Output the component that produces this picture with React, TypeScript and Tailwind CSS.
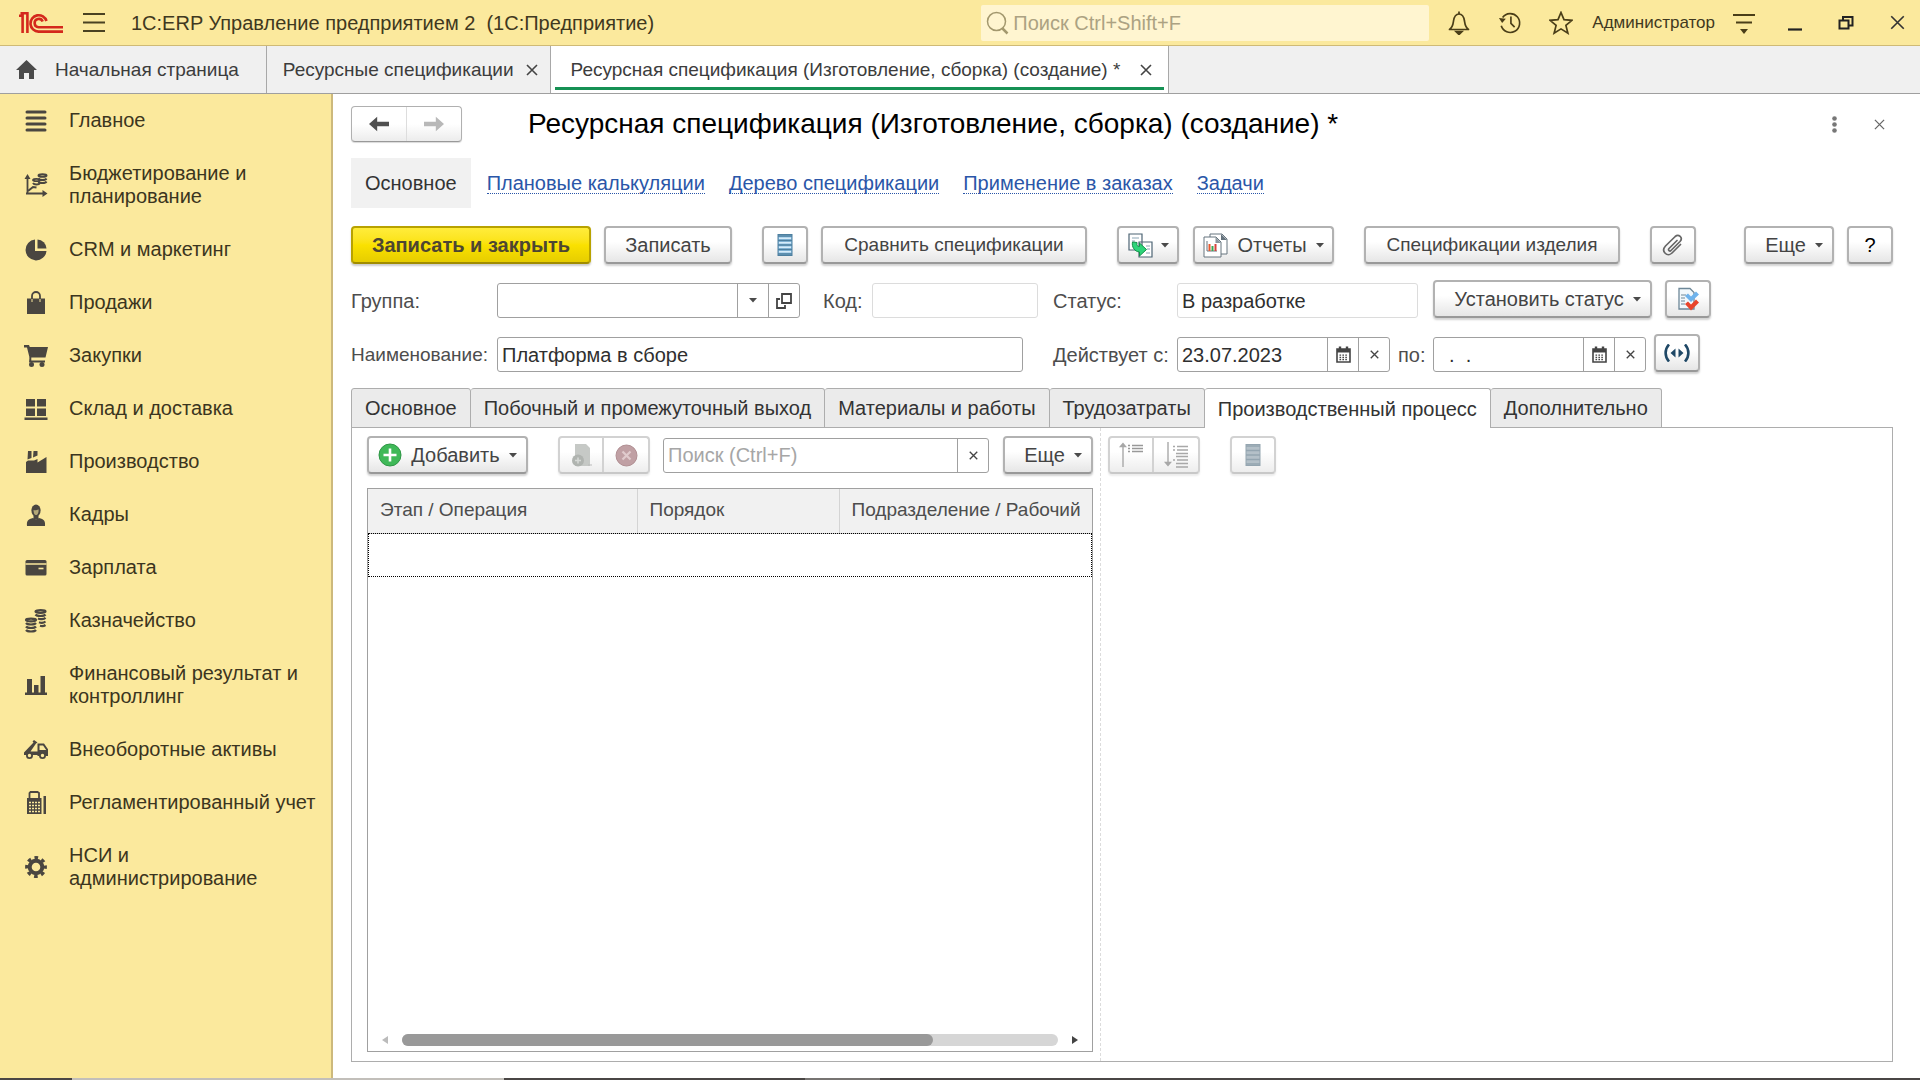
import React from "react";

const ink = "#4a4640";

function Caret() {
  return (
    <svg width="8" height="5" viewBox="0 0 8 5" className="shrink-0" aria-hidden="true">
      <path d="M0 0h8L4 4.6z" fill="#4a4a4a" />
    </svg>
  );
}

function Cross({ size, color = "#444", width = 1.6 }: { size: number; color?: string; width?: number }) {
  return (
    <svg width={size} height={size} viewBox="0 0 12 12" aria-hidden="true">
      <path d="M1 1l10 10M11 1L1 11" stroke={color} strokeWidth={width} fill="none" />
    </svg>
  );
}

const buttonBase =
  "flex h-[38px] shrink-0 items-center justify-center whitespace-nowrap rounded-[4px] border-2 leading-6 ";
const buttonPlain =
  "border-[#b2b2b2] border-b-[#999] bg-linear-to-b from-white from-40% to-[#e6e6e6] text-[#444] shadow-[0_2px_2px_rgba(0,0,0,0.18)] ";
const buttonOff =
  "border-[#d2d2d2] border-b-[#c8c8c8] bg-linear-to-b from-white from-40% to-[#ededed] shadow-[0_2px_2px_rgba(0,0,0,0.08)] ";

function Button({
  className,
  label,
  disabled,
  compact,
  children,
}: {
  className: string;
  label?: string;
  disabled?: boolean;
  compact?: boolean;
  children: React.ReactNode;
}) {
  return (
    <button
      type="button"
      aria-label={label}
      disabled={disabled}
      className={buttonBase + (compact ? "text-[19px] " : "text-[20px] ") + (disabled ? buttonOff : buttonPlain) + className}
    >
      {children}
    </button>
  );
}

function ListIcon({ faded }: { faded?: boolean }) {
  const fill = faded ? "#b4c0c8" : "#8fc1e3";
  const line = faded ? "#94a5b0" : "#4d7f9f";
  return (
    <svg width="16" height="22" viewBox="0 0 16 22" aria-hidden="true">
      <rect x="1" y="0.5" width="14" height="21" fill={fill} stroke={line} />
      <path d="M1 2h14M1 6.5h14M1 11h14M1 15.500h14M1 20h14" stroke={line} strokeWidth="1.500" />
      <path d="M2 4.300h12M2 8.800h12M2 13.300h12M2 17.800h12" stroke={faded ? "#b4c0c8" : "#d7ecf9"} strokeWidth="1.500" />
    </svg>
  );
}

function CalendarIcon() {
  return (
    <svg width="15" height="17" viewBox="0 0 15 17" aria-hidden="true">
      <path d="M1 3h13v13H1z" fill="#fff" stroke="#444" strokeWidth="1.600" />
      <path d="M1 3h13v3.500H1z" fill="#444" />
      <path d="M4 0.500v3M11 0.500v3" stroke="#444" strokeWidth="2.400" />
      <path d="M3.500 9.200h8.500M3.500 11.500h8.500M3.500 13.700h8.500" stroke="#444" strokeWidth="1.300" strokeDasharray="1.600 1.300" />
    </svg>
  );
}

const sideIcons: Record<string, React.ReactNode> = {
  main: <path d="M3 3h18M3 9h18M3 15h18M3 21h18" stroke={ink} strokeWidth="3" strokeLinecap="round" />,
  budget: (
    <g stroke={ink} fill="none">
      <path d="M3.500 4v17.500M2 20.500h18" strokeWidth="1.800" />
      <path d="M0.500 6l3-5 3 5zM18.500 17l5 3.500-5 3.500z" fill={ink} stroke="none" />
      <path d="M4 18l5-4 3.500 .5" strokeWidth="2" />
      <ellipse cx="18.500" cy="2.500" rx="4" ry="1.300" strokeWidth="2" />
      <path d="M14.500 5.500c1 2 7 2 8 0M14.500 8.500c1 2 7 2 8 0" strokeWidth="2" />
      <ellipse cx="12.500" cy="7" rx="3.500" ry="1.200" strokeWidth="1.800" />
      <path d="M9 10c1 2 6 2 7 0" strokeWidth="1.900" />
    </g>
  ),
  crm: (
    <g fill={ink}>
      <path d="M11 1.500A10.500 10.500 0 1 0 22.500 13H11z" />
      <path d="M13.500 1.500v9h9A9.500 9.500 0 0 0 13.500 1.500z" />
    </g>
  ),
  sales: (
    <g>
      <path d="M3 7.500h18v15.500H3z" fill={ink} />
      <path d="M8 11V5a4 4 0 0 1 8 0v6" fill="none" stroke={ink} strokeWidth="1.800" />
      <path d="M8 8v3M16 8v3" stroke="#fbe99d" strokeWidth="1" />
    </g>
  ),
  purchase: (
    <g fill={ink}>
      <path d="M0 1h5l.8 2H24l-2.500 10.500H5.500L3 3.500H0z" />
      <path d="M5.500 13h1.800v3.500H21v2H5z" />
      <circle cx="7.500" cy="20.500" r="2.500" />
      <circle cx="18" cy="20.500" r="2.500" />
    </g>
  ),
  stock: <path d="M2 2h9v7.500H2zM13 2h9v7.500h-9zM2 11.500h9V19H2zM13 11.500h9V19h-9zM0.500 20.500h23V23H0.500z" fill={ink} />,
  factory: <path d="M2 23V12l2-1.500h6L13.500 9v3.500L22.500 7v16zM4 1h3.500v7L3.500 9.500zM9.500 1h4v4.500l-4.500 2z" fill={ink} />,
  staff: (
    <g fill={ink}>
      <path d="M3 23c-.5-5 1-7 6-8 1.500 1.500 4.500 1.500 6 0 5 1 6.500 3 6 8z" />
      <ellipse cx="12" cy="7.500" rx="4.600" ry="6" />
      <path d="M9.500 7c2 .8 3.500 0 5-.8.500 3.500-1 5.800-2.500 5.800S9.500 10 9.500 7z" fill="#fbe99d" opacity=".6" />
      <path d="M9.500 12h5v4h-5z" />
    </g>
  ),
  salary: (
    <g>
      <rect x="1.500" y="4" width="21" height="15.500" rx="1.500" fill={ink} />
      <path d="M1.500 8h21" stroke="#fbe99d" strokeWidth="1.500" />
      <path d="M14.500 12.500h5" stroke="#fbe99d" strokeWidth="1.600" />
    </g>
  ),
  treasury: (
    <g fill="none" stroke={ink} strokeWidth="2.200">
      <ellipse cx="16.500" cy="2.500" rx="5" ry="1.300" />
      <path d="M11.500 5.500c1.500 2 8.500 2 10 0M14 9.500c2 1 6 .8 7.500-.8M15 13.200c2 .8 5 .5 6.500-.7M16 16.800c2 .5 4 .3 5.500-.8" />
      <ellipse cx="7" cy="11" rx="5" ry="1.300" />
      <path d="M2 14c1.500 2 8.500 2 10 0M2 17.500c1.500 2 8.500 2 10 0M2 21c1.500 2 8.500 2 10 0" />
    </g>
  ),
  finance: <path d="M3 6h5v14H3zM10 12h4.500v8H10zM16.500 3H21v17h-4.500zM1 19.500h22V22H1z" fill={ink} />,
  truck: (
    <g>
      <path d="M0 14.500L9.500 4.500 8.500 3.500 10 2l3.500 2.500-1.500 1-5.500 8h8v3.500H0z" fill={ink} />
      <path d="M14.500 17V6.500h5l3.500 5V17z" fill="none" stroke={ink} strokeWidth="2" />
      <path d="M15 12h9v5h-9z" fill={ink} />
      <circle cx="5.500" cy="17.500" r="2.600" fill="#fbe99d" stroke={ink} strokeWidth="1.800" />
      <circle cx="18.500" cy="17.500" r="2.600" fill="#fbe99d" stroke={ink} strokeWidth="1.800" />
    </g>
  ),
  register: (
    <g>
      <path d="M5.500 8V2l1-1h7l1.500 1v6z" fill="none" stroke={ink} strokeWidth="1.800" />
      <path d="M3 7h14.500v16H3zM19.500 5H22v18h-2.500z" fill={ink} />
      <path d="M5 11.500h11M5 14.500h11M5 17.500h11M5 20.500h11" stroke="#fbe99d" strokeWidth="1.400" strokeDasharray="2 1" />
    </g>
  ),
  gear: (
    <g fill="none" stroke={ink}>
      <circle cx="12" cy="12" r="6.300" strokeWidth="4" />
      <circle cx="12" cy="12" r="9.300" strokeWidth="3.200" strokeDasharray="3.650 3.650" strokeDashoffset="1.800" />
    </g>
  ),
};

const sections: [string, string][] = [
  ["main", "Главное"],
  ["budget", "Бюджетирование и планирование"],
  ["crm", "CRM и маркетинг"],
  ["sales", "Продажи"],
  ["purchase", "Закупки"],
  ["stock", "Склад и доставка"],
  ["factory", "Производство"],
  ["staff", "Кадры"],
  ["salary", "Зарплата"],
  ["treasury", "Казначейство"],
  ["finance", "Финансовый результат и контроллинг"],
  ["truck", "Внеоборотные активы"],
  ["register", "Регламентированный учет"],
  ["gear", "НСИ и администрирование"],
];

function Header() {
  const tool = "flex h-6 w-6 shrink-0 items-center justify-center";
  return (
    <header className="flex h-[46px] items-center border-b border-[#cfba76] bg-[#fbe99d] pr-[11px] pl-[19px] text-[#3f3820]">
      <svg width="45" height="22" viewBox="0 0 45 22" aria-label="1С" role="img">
        <g fill="none" stroke="#d4281c" strokeWidth="2.600">
          <path d="M0 3.800h3.600V21M1.500 1.300H8.400V21" />
          <path d="M27.500 9A8.200 8.200 0 1 0 19.500 19.600H44" />
          <path d="M23.700 9.500A4.200 4.200 0 1 0 19.500 15.300H44" />
        </g>
      </svg>
      <button type="button" aria-label="Главное меню" className="ml-[19px]">
        <svg width="22" height="19" viewBox="0 0 22 19">
          <path d="M0 1h22M0 9.500h22M0 18h22" stroke="#4a4222" strokeWidth="1.800" />
        </svg>
      </button>
      <div className="ml-[26px] whitespace-pre text-[20px] leading-6">1С:ERP Управление предприятием 2  (1С:Предприятие)</div>
      <label className="ml-auto flex h-9 w-[448px] shrink items-center gap-1 rounded-[2px] bg-[#fff5d0] px-1">
        <svg width="24" height="24" viewBox="0 0 24 24" fill="none" stroke="#a3986e" strokeWidth="1.500" aria-hidden="true">
          <circle cx="11.500" cy="10.500" r="9" />
          <path d="M17.500 17.500l5 5" strokeWidth="2.500" />
        </svg>
        <input
          type="search"
          aria-label="Поиск"
          placeholder="Поиск Ctrl+Shift+F"
          className="min-w-0 flex-1 bg-transparent text-[20px] leading-6 outline-none placeholder:text-[#aca282]"
        />
      </label>
      <div className="ml-[18px] flex items-center gap-[27px]">
        <button type="button" aria-label="Оповещения" className={tool}>
          <svg width="24" height="24" viewBox="0 0 24 24" fill="none" stroke="#4a3e18" strokeWidth="1.700">
            <path d="M2.500 18.500c3.500-2.500 3.500-5 4-8.500.6-4 2-7 5.500-7s4.900 3 5.500 7c.5 3.500.5 6 4 8.500z" strokeLinejoin="round" />
            <path d="M12 0.500V3" />
            <path d="M9 20.500h6l-3 3z" fill="#4a3e18" />
          </svg>
        </button>
        <button type="button" aria-label="История" className={tool}>
          <svg width="26" height="24" viewBox="0 0 26 24" fill="none" stroke="#4a3e18" strokeWidth="1.800">
            <path d="M5 6a10.200 10.200 0 1 1-1.500 9" />
            <path d="M14 5v7.500l4 4" />
            <path d="M1 6.500l7.500 1L4.500 12z" fill="#4a3e18" stroke="none" />
          </svg>
        </button>
        <button type="button" aria-label="Избранное" className={tool}>
          <svg width="24" height="24" viewBox="0 0 24 24" fill="none" stroke="#4a3e18" strokeWidth="1.700">
            <path d="M12 1.500l3 7.200 8 .6-6.100 5.100 2 7.800-6.900-4.300-6.900 4.300 2-7.800L1 9.300l8-.6z" />
          </svg>
        </button>
      </div>
      <span className="ml-[19px] text-[17px] leading-6">Администратор</span>
      <div className="ml-[17px] flex items-center gap-[27px]">
        <button type="button" aria-label="Настройки" className={tool}>
          <svg width="24" height="24" viewBox="0 0 24 24">
            <path d="M1 4h22M4 11.500h16" stroke="#4a3e18" strokeWidth="1.800" />
            <path d="M8 18h8l-4 5z" fill="#4a3e18" />
          </svg>
        </button>
        <button type="button" aria-label="Свернуть" className={tool}>
          <svg width="24" height="24" viewBox="0 0 24 24">
            <path d="M5 18.500h14" stroke="#222" strokeWidth="2.200" />
          </svg>
        </button>
        <button type="button" aria-label="Восстановить" className={tool}>
          <svg width="24" height="24" viewBox="0 0 24 24" fill="none" stroke="#222" strokeWidth="2">
            <path d="M5.500 9.500h9v8h-9zM9 9V6h9.500v8.500H15" />
          </svg>
        </button>
        <button type="button" aria-label="Закрыть" className={tool}>
          <Cross size={15} color="#333" width={1.3} />
        </button>
      </div>
    </header>
  );
}

function WindowTabs() {
  return (
    <nav className="flex h-12 border-b border-[#9f9f9f] bg-[#f0f0f0] text-[19px] leading-6 whitespace-nowrap text-[#3c3c3c]">
      <button type="button" className="flex items-center gap-[18px] border-r border-[#a8a8a8] pr-[27px] pl-4">
        <svg width="21" height="19" viewBox="0 0 21 19" aria-hidden="true">
          <path d="M10.500 0L21 10h-3v9h-5v-6H8v6H3v-9H0z" fill="#4a4a4a" />
        </svg>
        Начальная страница
      </button>
      <div className="flex items-center gap-3 border-r border-[#a8a8a8] pr-3 pl-4">
        <button type="button">Ресурсные спецификации</button>
        <button type="button" aria-label="Закрыть вкладку">
          <Cross size={12} />
        </button>
      </div>
      <div className="flex border-r border-[#a8a8a8] bg-white px-1">
        <div className="mb-[3px] flex items-center gap-5 border-b-3 border-[#169154] px-3 pt-[6px] pl-4">
          <button type="button">Ресурсная спецификация (Изготовление, сборка) (создание) *</button>
          <button type="button" aria-label="Закрыть вкладку">
            <Cross size={12} />
          </button>
        </div>
      </div>
    </nav>
  );
}

function Sidebar() {
  return (
    <nav className="w-[333px] shrink-0 border-r-2 border-[#cdb97c] bg-[#fbe99d]">
      {sections.map(([key, text]) => (
        <a key={key} href="#" className="flex items-center py-[15px] pr-2 pl-6 text-[20px] leading-[23px] text-[#3b3520]">
          <svg width="24" height="24" viewBox="0 0 24 24" className="my-[-1px] mr-[21px] shrink-0" aria-hidden="true">
            {sideIcons[key]}
          </svg>
          <span>{text}</span>
        </a>
      ))}
    </nav>
  );
}

function CommandBar() {
  return (
    <div className="mt-[18px] flex items-center">
      <button
        type="button"
        className="flex h-[38px] w-[240px] shrink-0 items-center justify-center rounded-[4px] border-2 border-[#b8a200] border-b-[#a08c00] bg-linear-to-b from-[#ffec3a] via-[#fae100] to-[#e6cd00] text-[20px] leading-6 font-bold text-[#4d4632] shadow-[0_2px_2px_rgba(0,0,0,0.2)]"
      >
        Записать и закрыть
      </button>
      <Button className="ml-[13px] w-32">Записать</Button>
      <Button className="ml-[30px] w-[46px]" label="Список">
        <ListIcon />
      </Button>
      <Button compact className="ml-[13px] w-[266px]">Сравнить спецификации</Button>
      <Button className="ml-[30px] w-[62px] gap-[8px]" label="Создать на основании">
        <svg width="25" height="25" viewBox="0 0 25 25" aria-hidden="true">
          <path d="M1 1h13v16H1zM11 9h13v15H11z" fill="#fff" stroke="#4d6474" strokeWidth="1.200" />
          <path d="M4 5h7M4 8h3M18 13h4M19 16h3M18 20h4" stroke="#8aa5b5" />
          <path d="M4.500 9l4.500 .5c-.5 3 .5 4 2.500 4V10l7 6.500-7 6.500v-4C6.500 18.500 3.500 14 4.500 9z" fill="#2ed47a" stroke="#149048" />
        </svg>
        <Caret />
      </Button>
      <Button className="ml-[14px] w-[141px] gap-[9px]">
        <svg width="25" height="25" viewBox="0 0 25 25" aria-hidden="true">
          <path d="M7 1h12l5 5v15H7z" fill="#fff" stroke="#66747e" />
          <path d="M18 1v6h6z" fill="#66747e" />
          <path d="M1 4h12l5 5v15H1z" fill="#fff" stroke="#66747e" />
          <path d="M12.500 4v6H18z" fill="#8b979e" />
          <path d="M4 8v10h10" fill="none" stroke="#66747e" />
          <path d="M6.500 11v7" stroke="#e8572e" strokeWidth="2" />
          <path d="M9.500 13v5" stroke="#39a853" strokeWidth="2" />
          <path d="M12.500 11v7" stroke="#d8413a" strokeWidth="2" />
        </svg>
        Отчеты
        <Caret />
      </Button>
      <Button compact className="ml-[30px] w-64">Спецификации изделия</Button>
      <Button className="ml-[30px] w-[46px]" label="Присоединенные файлы">
        <svg width="22" height="22" viewBox="0 0 22 22" fill="none" stroke="#666" strokeWidth="1.700" strokeLinecap="round" aria-hidden="true">
          <path d="M15 6.500l-8 8c-1.500 1.500.8 3.300 2 2l9-9c3.500-4-1.500-8-4.800-5L3.500 12c-5 5.500 2 11.500 6.500 7l8.500-8.500" />
        </svg>
      </Button>
      <Button className="ml-auto w-[90px] gap-[9px] pl-[10px]">
        Еще
        <Caret />
      </Button>
      <Button className="ml-[13px] w-[46px]" label="Справка">
        <span className="text-black">?</span>
      </Button>
    </div>
  );
}

const fieldBox = "flex h-[35px] shrink-0 items-stretch rounded-[3px] border bg-white ";
const fieldText = "min-w-0 flex-1 bg-transparent px-1 text-[20px] leading-6 text-[#2f2f2f] outline-none";
const fieldButton = "flex w-[31px] items-center justify-center border-l border-[#a0a0a0]";
const fieldLabel = "flex h-[35px] shrink-0 items-center leading-6 text-[#4d4d4d] ";

function DateField({ id, value }: { id: string; value: string }) {
  return (
    <div className={fieldBox + "w-[213px] border-[#a0a0a0]"}>
      <input id={id} type="text" defaultValue={value} className={fieldText} />
      <button type="button" aria-label="Выбрать дату" className={fieldButton}>
        <CalendarIcon />
      </button>
      <button type="button" aria-label="Очистить" className={fieldButton}>
        <Cross size={9} width={1.8} />
      </button>
    </div>
  );
}

function Fields() {
  return (
    <>
      <div className="mt-4 flex items-end">
        <label htmlFor="group" className={fieldLabel + "w-[146px] text-[20px]"}>Группа:</label>
        <div className={fieldBox + "w-[303px] border-[#a0a0a0]"}>
          <input id="group" type="text" className={fieldText} />
          <button type="button" aria-label="Выбрать из списка" className={fieldButton}>
            <Caret />
          </button>
          <button type="button" aria-label="Открыть" className={fieldButton}>
            <svg width="16" height="16" viewBox="0 0 16 16" fill="none" stroke="#444" strokeWidth="1.800" aria-hidden="true">
              <path d="M6 1h9v9H6zM4 6H1v9h8v-3" />
            </svg>
          </button>
        </div>
        <label htmlFor="code" className={fieldLabel + "ml-[23px] w-[49px] text-[20px]"}>Код:</label>
        <div className={fieldBox + "w-[166px] border-[#dcdcdc]"}>
          <input id="code" type="text" readOnly className={fieldText} />
        </div>
        <label htmlFor="status" className={fieldLabel + "ml-[15px] w-[124px] text-[20px]"}>Статус:</label>
        <div className={fieldBox + "w-[241px] border-[#dcdcdc]"}>
          <input id="status" type="text" readOnly defaultValue="В разработке" className={fieldText} />
        </div>
        <Button className="ml-[15px] w-[219px] gap-[9px] pl-[10px]">
          Установить статус
          <Caret />
        </Button>
        <Button className="ml-[13px] w-[46px]" label="Проверить">
          <svg width="22" height="24" viewBox="0 0 22 24" aria-hidden="true">
            <path d="M2 1.500h11l4 4V22H2z" fill="#f2f8fc" stroke="#6d8798" strokeWidth="1.300" />
            <path d="M4 8h5M4 11h4M4 14h4M4 17h4" stroke="#6d8798" />
            <path d="M8 9l3-2.500 3 3 5-5 3 3L14 15z" fill="#6fb3ec" />
            <path d="M8 17l3-2.500 3 3 5-5 3 3L14 23.500z" fill="#e8452c" />
          </svg>
        </Button>
      </div>
      <div className="mt-4 flex items-end">
        <label htmlFor="name" className={fieldLabel + "w-[146px] text-[19px]"}>Наименование:</label>
        <div className={fieldBox + "w-[526px] border-[#a0a0a0]"}>
          <input id="name" type="text" defaultValue="Платформа в сборе" className={fieldText} />
        </div>
        <label htmlFor="from" className={fieldLabel + "ml-[30px] w-[124px] text-[20px]"}>Действует с:</label>
        <DateField id="from" value="23.07.2023" />
        <label htmlFor="to" className={fieldLabel + "ml-2 w-[35px] text-[20px]"}>по:</label>
        <DateField id="to" value="  .  ." />
        <Button className="ml-2 w-[46px]" label="Период">
          <svg width="26" height="18" viewBox="0 0 26 18" aria-hidden="true">
            <path d="M5 0.500c-4.500 5-4.500 12 0 17M21 0.500c4.500 5 4.500 12 0 17" fill="none" stroke="#1f4866" strokeWidth="2.600" />
            <path d="M11.500 4.500v9L6.500 9zM14.500 4.500v9l5-4.500z" fill="#1f4866" />
          </svg>
        </Button>
      </div>
    </>
  );
}

const pages = [
  "Основное",
  "Побочный и промежуточный выход",
  "Материалы и работы",
  "Трудозатраты",
  "Производственный процесс",
  "Дополнительно",
];

function PageTabs() {
  return (
    <div role="tablist" className="z-10 mt-4 -mb-px flex h-10 text-[20px] leading-6 whitespace-nowrap text-[#333]">
      {pages.map((page, i) => (
        <button
          key={page}
          type="button"
          role="tab"
          aria-selected={i === 4}
          className={
            "rounded-t-[3px] border-t border-r border-[#adadad] px-[13px] first:border-l " +
            (i === 4 ? "bg-white" : "border-b bg-[#ebebeb]")
          }
        >
          {page}
        </button>
      ))}
    </div>
  );
}

function ProcessPanel() {
  const half = "flex w-11 items-center justify-center";
  return (
    <section className="mb-4 flex flex-1 border border-[#adadad] bg-white">
      <div className="flex w-[749px] shrink-0 flex-col border-r border-dashed border-[#dcdcdc] pt-2 pr-[7px] pb-[9px] pl-[15px]">
        <div className="flex items-center">
          <Button className="w-[161px] gap-[9px]">
            <svg width="24" height="24" viewBox="0 0 24 24" aria-hidden="true">
              <circle cx="12" cy="12" r="11" fill="#3fb958" stroke="#2f9646" />
              <path d="M12 5.500v13M5.500 12h13" stroke="#fff" strokeWidth="2.600" />
            </svg>
            Добавить
            <Caret />
          </Button>
          <div className={"ml-[30px] " + buttonBase + buttonOff}>
            <button type="button" disabled aria-label="Скопировать" className={half + " h-full border-r-2 border-[#d2d2d2]"}>
              <svg width="21" height="24" viewBox="0 0 21 24" aria-hidden="true">
                <path d="M4 1h11l4 4v18H4z" fill="#c6c9c6" />
                <path d="M17 22h4" stroke="#bbb" />
                <circle cx="7" cy="17.500" r="6" fill="#b0b4b0" />
                <path d="M7 14.500v6M4 17.500h6" stroke="#d6d9d6" strokeWidth="1.500" />
              </svg>
            </button>
            <button type="button" disabled aria-label="Удалить" className={half + " h-full"}>
              <svg width="23" height="23" viewBox="0 0 23 23" aria-hidden="true">
                <circle cx="11.500" cy="11.500" r="10.500" fill="#c0a0a4" stroke="#b08e92" />
                <path d="M7.500 7.500l8 8M15.500 7.500l-8 8" stroke="#e0cbcd" strokeWidth="2.200" />
              </svg>
            </button>
          </div>
          <div className={fieldBox + "mr-[14px] ml-[13px] flex-1 shrink border-[#a0a0a0]"}>
            <input type="text" aria-label="Поиск в списке" placeholder="Поиск (Ctrl+F)" className={fieldText + " placeholder:text-[#a6a6a6]"} />
            <button type="button" aria-label="Очистить" className={fieldButton}>
              <Cross size={9} width={1.8} />
            </button>
          </div>
          <Button className="w-[90px] gap-[9px] pl-[10px]">
            Еще
            <Caret />
          </Button>
        </div>
        <div className="mt-[14px] flex flex-1 flex-col overflow-hidden border border-[#a0a0a0]">
          <table className="w-full table-fixed border-collapse text-left text-[19px] leading-6 text-[#4d4d4d]">
            <thead>
              <tr className="h-11 border-b border-[#c4c4c4] bg-[#f1f1f1]">
                <th className="w-[269px] border-r border-[#d4d4d4] px-3 pb-[2px] font-normal">Этап / Операция</th>
                <th className="w-[202px] border-r border-[#d4d4d4] px-3 pb-[2px] font-normal">Порядок</th>
                <th className="pb-[2px] pl-3 font-normal whitespace-nowrap">Подразделение / Рабочий</th>
              </tr>
            </thead>
            <tbody>
              <tr className="h-11 outline-1 -outline-offset-1 outline-dotted outline-black">
                <td />
                <td />
                <td />
              </tr>
            </tbody>
          </table>
          <div className="mt-auto mb-[5px] flex h-3 items-center pr-[14px] pl-[14px]">
            <svg width="6" height="8" viewBox="0 0 6 8" aria-hidden="true">
              <path d="M6 0v8L0 4z" fill="#bbb" />
            </svg>
            <div className="mx-[14px] h-3 flex-1 rounded-full bg-[#d6d6d6]">
              <div className="h-3 w-[81%] rounded-full bg-[#999]" />
            </div>
            <svg width="6" height="8" viewBox="0 0 6 8" aria-hidden="true">
              <path d="M0 0v8l6-4z" fill="#444" />
            </svg>
          </div>
        </div>
      </div>
      <div className="flex flex-1 items-start pt-2 pl-[7px]">
        <div className={buttonBase + buttonOff}>
          <button type="button" disabled aria-label="Вверх" className={half + " h-full border-r-2 border-[#d2d2d2]"}>
            <svg width="24" height="26" viewBox="0 0 24 26" fill="none" stroke="#a8a8a8" strokeWidth="1.400" aria-hidden="true">
              <path d="M4 3v22" />
              <path d="M1.500 4.500l2.500-3 2.500 3z" fill="#a8a8a8" />
              <path d="M9 3.500h2M13 3.500h11M9 6.500h2M13 6.500h11M9 9.500h2M13 9.500h11" stroke="#999" />
            </svg>
          </button>
          <button type="button" disabled aria-label="Вниз" className={half + " h-full"}>
            <svg width="24" height="26" viewBox="0 0 24 26" fill="none" stroke="#a8a8a8" strokeWidth="1.400" aria-hidden="true">
              <path d="M4 0v22" />
              <path d="M1.500 20.500l2.500 3 2.500-3z" fill="#a8a8a8" />
              <path d="M9 4.500h2M13 4.500h11M9 8h2M13 8h11M12 11.500h12M9 18h2M13 18h11M12 21.500h12M12 25h12M12 14.500h12" />
            </svg>
          </button>
        </div>
        <Button className="ml-[30px] w-[46px]" disabled label="Показать список">
          <ListIcon faded />
        </Button>
      </div>
    </section>
  );
}

const links = ["Плановые калькуляции", "Дерево спецификации", "Применение в заказах", "Задачи"];

export default function App() {
  return (
    <div className="flex min-h-screen flex-col bg-white font-['Liberation_Sans',Arial,sans-serif]">
      <Header />
      <WindowTabs />
      <div className="flex flex-1">
        <Sidebar />
        <main className="flex min-w-0 flex-1 flex-col pt-3 pr-[27px] pl-[18px]">
          <div className="flex h-9 items-center">
            <div className="flex h-9 shrink-0 rounded-[4px] border border-[#b0b0b0] border-b-[#999] bg-linear-to-b from-white from-50% to-[#ececec] shadow-[0_1px_1px_rgba(0,0,0,0.15)]">
              <button type="button" aria-label="Назад" className="flex w-[55px] items-center justify-center border-r border-[#ddd]">
                <svg width="20" height="16" viewBox="0 0 22 16" aria-hidden="true">
                  <path d="M0 8l9-8v5.500h13v5H9V16z" fill="#505050" />
                </svg>
              </button>
              <button type="button" aria-label="Вперед" className="flex w-[54px] items-center justify-center">
                <svg width="20" height="16" viewBox="0 0 22 16" aria-hidden="true">
                  <path d="M22 8l-9-8v5.500H0v5h13V16z" fill="#b8b8b8" />
                </svg>
              </button>
            </div>
            <h1 className="ml-[66px] whitespace-nowrap text-[28px] leading-9 text-black">
              Ресурсная спецификация (Изготовление, сборка) (создание) *
            </h1>
            <button type="button" aria-label="Дополнительные действия" className="ml-auto flex h-6 w-6 items-center justify-center">
              <svg width="5" height="17" viewBox="0 0 5 17" fill="#777">
                <circle cx="2.500" cy="2.500" r="2.300" />
                <circle cx="2.500" cy="8.500" r="2.300" />
                <circle cx="2.500" cy="14.500" r="2.300" />
              </svg>
            </button>
            <button type="button" aria-label="Закрыть форму" className="mr-[2px] ml-[21px] flex h-6 w-6 items-center justify-center">
              <Cross size={11} color="#666" width={1.4} />
            </button>
          </div>
          <nav className="mt-4 flex h-[50px] items-center gap-6 text-[20px] whitespace-nowrap">
            <a href="#" className="mr-[-8px] flex h-[50px] items-center bg-[#f1f1f1] px-[14px] text-[#333]">
              Основное
            </a>
            {links.map((text) => (
              <a key={text} href="#" className="border-b border-dotted border-[#2a56a8] leading-[20px] text-[#2a56a8]">
                {text}
              </a>
            ))}
          </nav>
          <CommandBar />
          <Fields />
          <PageTabs />
          <ProcessPanel />
        </main>
      </div>
      <div className="flex h-[2px] shrink-0 bg-[#4a4645]">
        <div className="ml-[72px] w-[432px] bg-[#c2bfba]" />
        <div className="ml-[301px] w-[75px] bg-[#777472]" />
      </div>
    </div>
  );
}
